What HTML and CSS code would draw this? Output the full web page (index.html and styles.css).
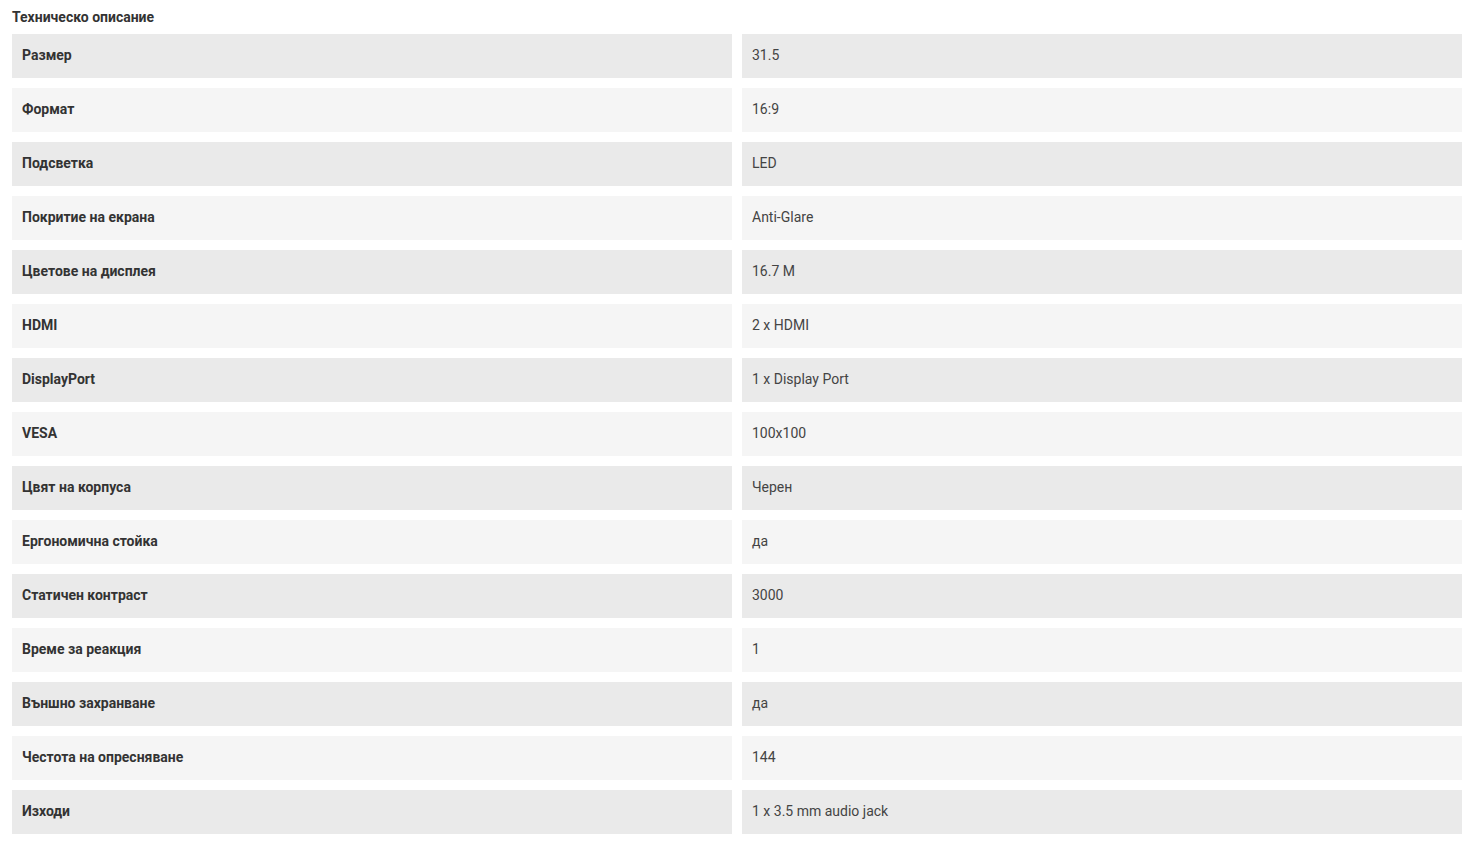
FILE: index.html
```html
<!DOCTYPE html>
<html lang="bg">
<head>
<meta charset="utf-8">
<title>Техническо описание</title>
<link rel="stylesheet" href="styles.css">
</head>
<body>
<section class="specs">
  <h2 class="specs-title">Техническо описание</h2>
  <div class="specs-table">
    <div class="row dark"><div class="cell key">Размер</div><div class="cell val">31.5</div></div>
    <div class="row light"><div class="cell key">Формат</div><div class="cell val">16:9</div></div>
    <div class="row dark"><div class="cell key">Подсветка</div><div class="cell val">LED</div></div>
    <div class="row light"><div class="cell key">Покритие на екрана</div><div class="cell val">Anti-Glare</div></div>
    <div class="row dark"><div class="cell key">Цветове на дисплея</div><div class="cell val">16.7 M</div></div>
    <div class="row light"><div class="cell key">HDMI</div><div class="cell val">2 x HDMI</div></div>
    <div class="row dark"><div class="cell key">DisplayPort</div><div class="cell val">1 x Display Port</div></div>
    <div class="row light"><div class="cell key">VESA</div><div class="cell val">100x100</div></div>
    <div class="row dark"><div class="cell key">Цвят на корпуса</div><div class="cell val">Черен</div></div>
    <div class="row light"><div class="cell key">Ергономична стойка</div><div class="cell val">да</div></div>
    <div class="row dark"><div class="cell key">Статичен контраст</div><div class="cell val">3000</div></div>
    <div class="row light"><div class="cell key">Време за реакция</div><div class="cell val">1</div></div>
    <div class="row dark"><div class="cell key">Външно захранване</div><div class="cell val">да</div></div>
    <div class="row light"><div class="cell key">Честота на опресняване</div><div class="cell val">144</div></div>
    <div class="row dark"><div class="cell key">Изходи</div><div class="cell val">1 x 3.5 mm audio jack</div></div>
  </div>
</section>
</body>
</html>
```
FILE: styles.css
```css
html, body {
  margin: 0;
  padding: 0;
  background: #ffffff;
}
body {
  font-family: Roboto, "Liberation Sans", Arial, sans-serif;
  font-size: 14px;
  color: #333333;
}
.specs {
  padding: 7px 10px 0 12px;
}
.specs-title {
  margin: 0 0 7px 0;
  font-size: 14px;
  line-height: 20px;
  font-weight: 700;
  color: #333333;
}
.specs-table {
  display: flex;
  flex-direction: column;
  gap: 10px;
  width: 1450px;
}
.row {
  display: grid;
  grid-template-columns: 720px 720px;
  column-gap: 10px;
}
.cell {
  height: 44px;
  display: flex;
  align-items: center;
  padding: 0 0 2px 10px;
  box-sizing: border-box;
  line-height: 20px;
}
.row.dark .cell {
  background: #eaeaea;
}
.row.light .cell {
  background: #f5f5f5;
}
.key {
  font-weight: 700;
  color: #333333;
}
.val {
  font-weight: 400;
  color: #444444;
}
```
